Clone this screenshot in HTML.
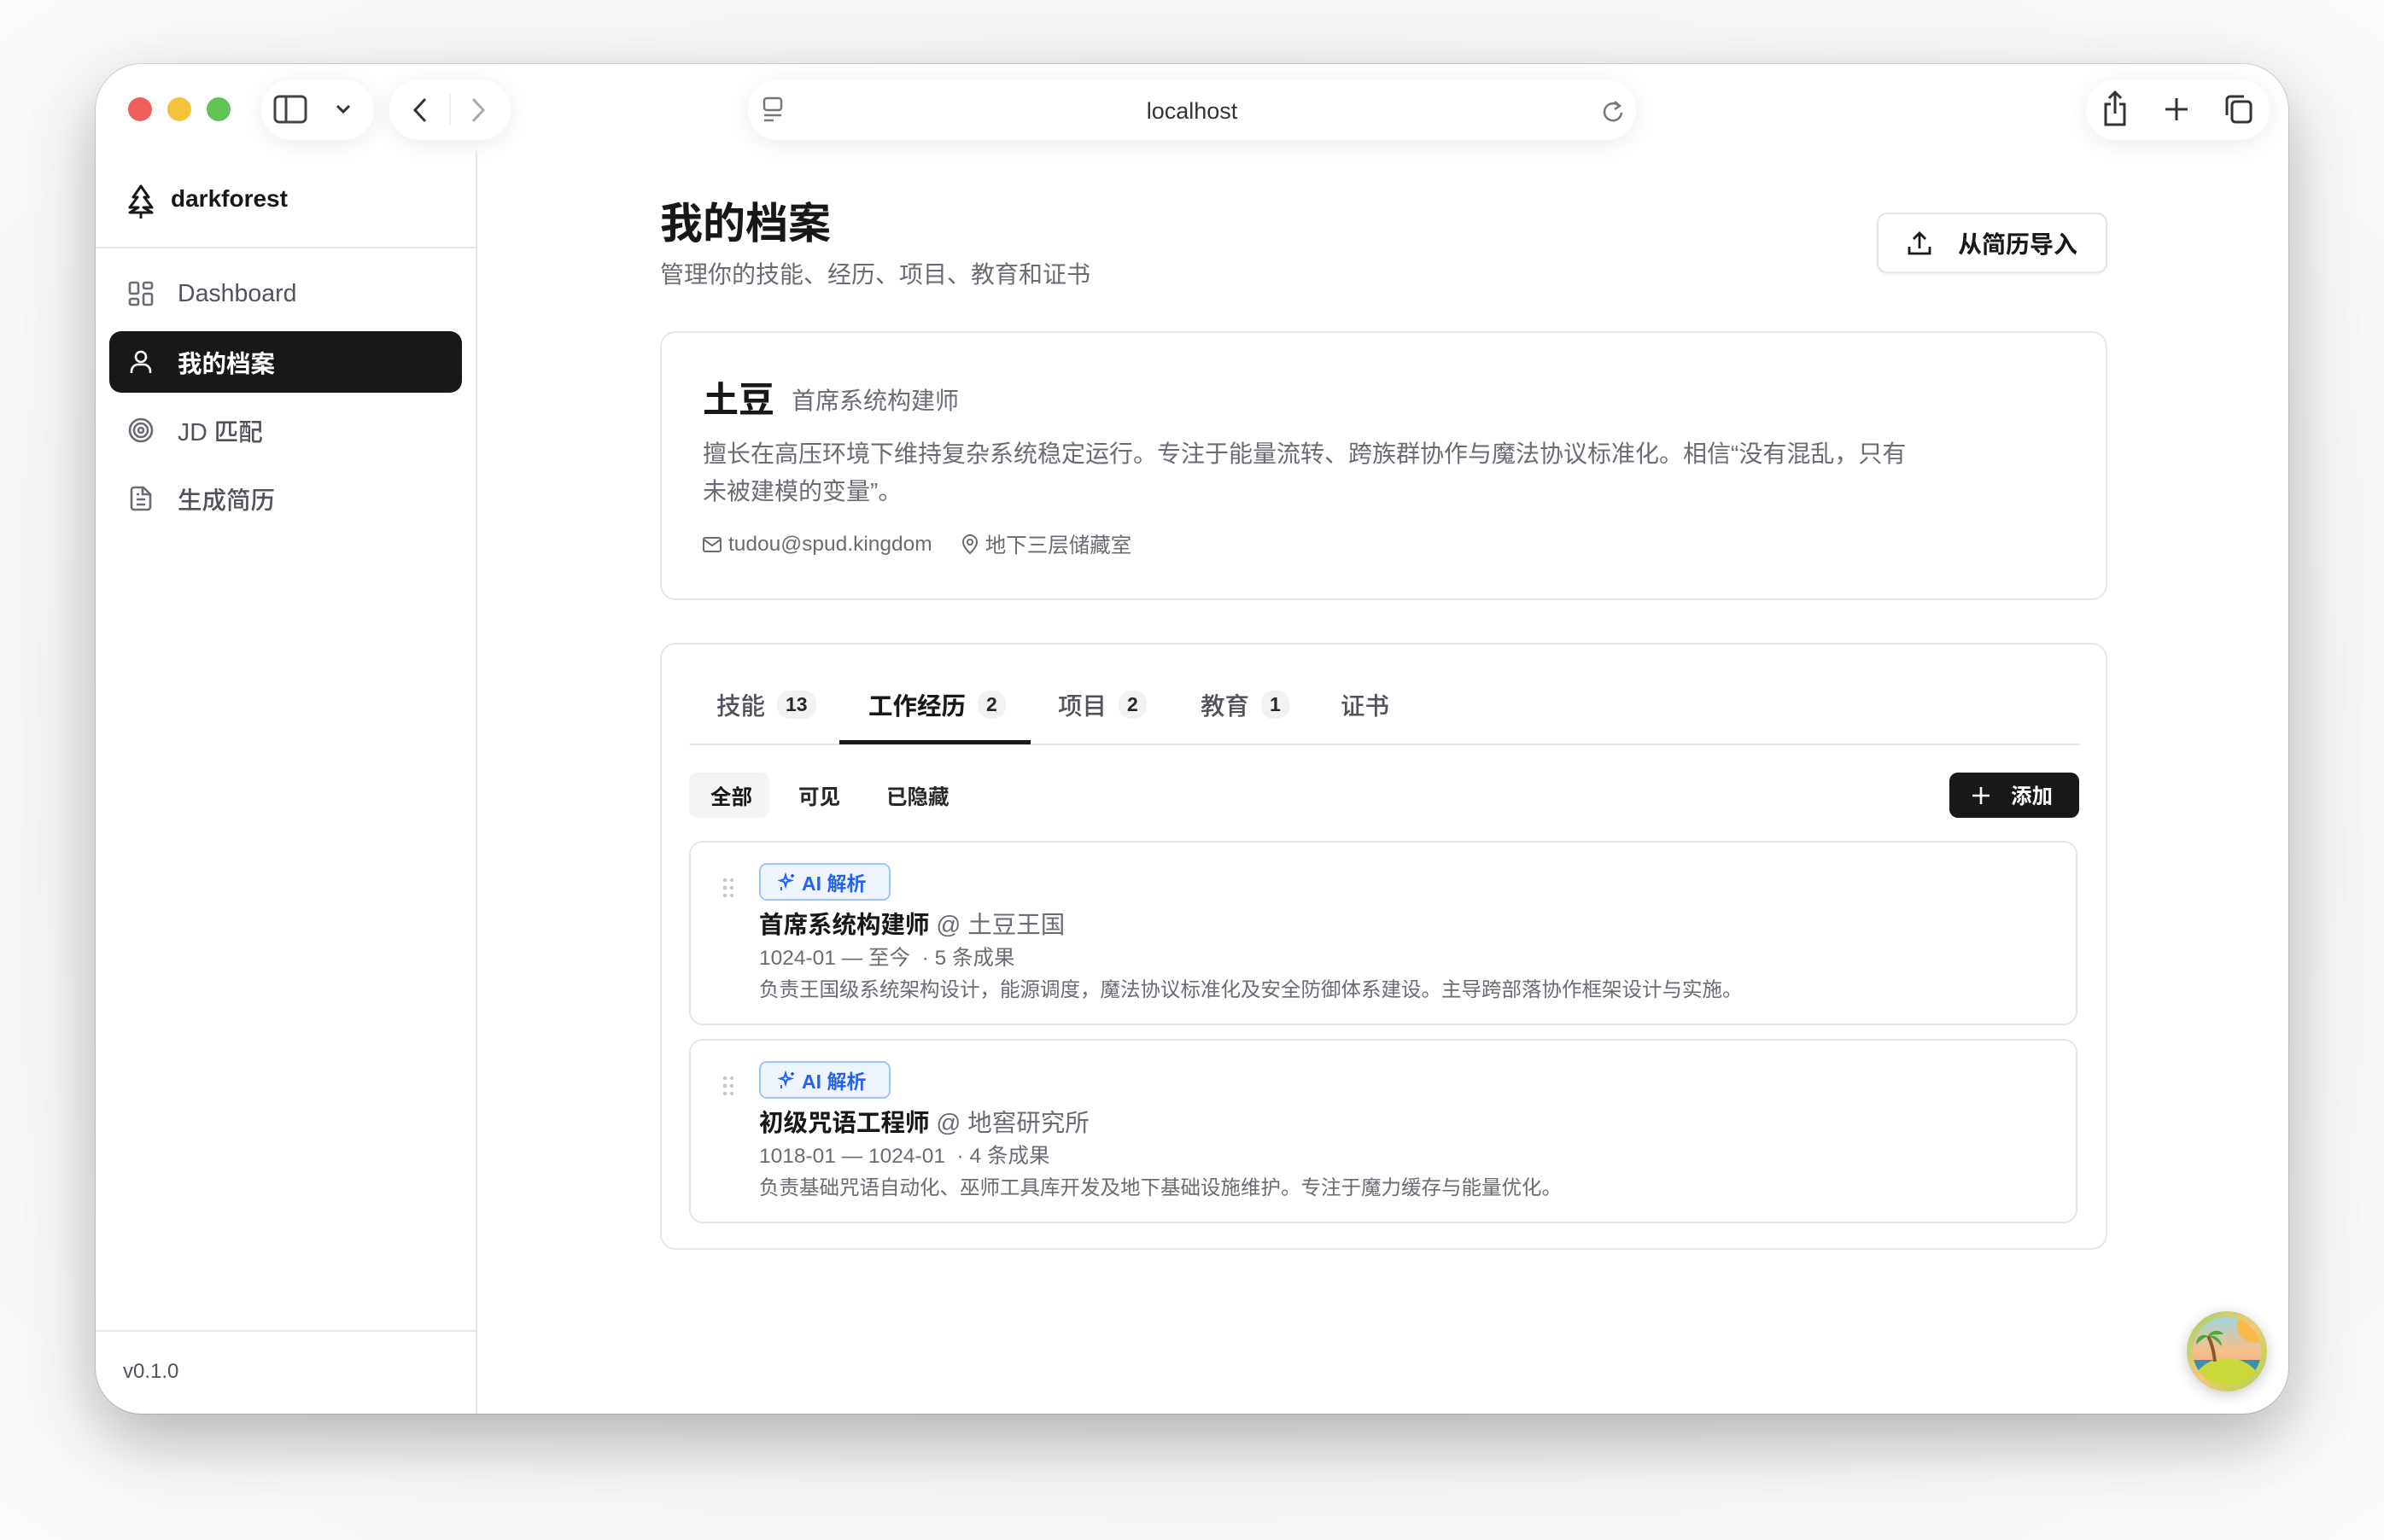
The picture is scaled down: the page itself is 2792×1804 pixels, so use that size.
<!DOCTYPE html>
<html><head><meta charset="utf-8"><style>
*{margin:0;padding:0;box-sizing:border-box}
html,body{width:2792px;height:1804px;overflow:hidden;background:#f7f7f7;font-family:"Liberation Sans","Noto Sans CJK SC",sans-serif;color:#18181b}
body{background:radial-gradient(ellipse at center,#e9e9e9 0%,#f3f3f3 55%,#fbfbfb 100%)}
.abs{position:absolute}
.win{position:absolute;left:112px;top:75px;width:2568px;height:1581px;background:#fff;border-radius:54px;box-shadow:0 30px 80px rgba(0,0,0,.28),0 0 0 1px rgba(0,0,0,.12);overflow:hidden}
.pill{position:absolute;background:#fff;border-radius:36px;box-shadow:0 4px 30px rgba(0,0,0,.08)}
.dot{position:absolute;top:39px;width:28px;height:28px;border-radius:50%}
.sb{position:absolute;left:0;top:102px;width:447px;bottom:0;border-right:2px solid #e8e8ea}
.nav{position:absolute;left:16px;width:413px;height:72px;border-radius:14px;display:flex;align-items:center;padding-left:22px;font-size:28.5px;color:#52525b;font-weight:500}
.nav svg{margin-right:28px}
.card{position:absolute;border:2px solid #e7e7e9;border-radius:18px;background:#fff}
.gray{color:#6b6b73}
.tab{position:absolute;top:50px;font-size:28.5px;color:#52525b;font-weight:500;display:flex;align-items:center}
.badge{display:inline-block;margin-left:14px;background:#f2f2f3;border-radius:14px;font-size:23px;padding:3px 10px;font-weight:700;color:#27272a}
.item{position:absolute;left:32px;width:1626px;height:216px;border:2px solid #e7e7e9;border-radius:16px}
.ai{position:absolute;left:80px;top:24px;width:154px;height:44px;border:2px solid #9fc3fb;background:#eef5ff;border-radius:9px;color:#2563eb;font-size:23px;font-weight:700;display:flex;align-items:center;padding-left:20px}
.it{position:absolute;left:80px;top:74px;font-size:28.5px;font-weight:700;color:#18181b}
.it span{font-weight:400;color:#6b6b73}
.dt{position:absolute;left:80px;top:116px;font-size:24.5px;color:#6b6b73}
.ds{position:absolute;left:80px;top:153px;font-size:23.5px;color:#6b6b73}
</style></head><body>
<div class="win">
 <div class="dot" style="left:38px;background:#ee5f5b"></div>
 <div class="dot" style="left:84px;background:#f5c33b"></div>
 <div class="dot" style="left:130px;background:#5fc454"></div>
 <div class="pill" style="left:194px;top:18px;width:132px;height:71px">
  <svg class="abs" style="left:14px;top:18px" width="40" height="34" viewBox="0 0 40 34"><rect x="2" y="2" width="36" height="30" rx="5" fill="none" stroke="#444" stroke-width="3"/><line x1="15" y1="2" x2="15" y2="32" stroke="#444" stroke-width="3"/></svg>
  <svg class="abs" style="left:86px;top:28px" width="20" height="14" viewBox="0 0 20 14"><path d="M3 3l7 7 7-7" fill="none" stroke="#333" stroke-width="3"/></svg>
 </div>
 <div class="pill" style="left:344px;top:18px;width:142px;height:71px">
  <svg class="abs" style="left:26px;top:20px" width="20" height="32" viewBox="0 0 20 32"><path d="M16 3L4 16l12 13" fill="none" stroke="#333" stroke-width="3"/></svg>
  <div class="abs" style="left:70px;top:16px;width:2px;height:38px;background:#eee"></div>
  <svg class="abs" style="left:94px;top:20px" width="20" height="32" viewBox="0 0 20 32"><path d="M4 3l12 13L4 29" fill="none" stroke="#aaa" stroke-width="3"/></svg>
 </div>
 <div class="pill" style="left:764px;top:18px;width:1040px;height:71px">
  <svg class="abs" style="left:16px;top:20px" width="26" height="30" viewBox="0 0 26 30"><rect x="3" y="2" width="20" height="14" rx="3" fill="none" stroke="#777" stroke-width="2.5"/><line x1="3" y1="22" x2="23" y2="22" stroke="#777" stroke-width="2.5"/><line x1="3" y1="28" x2="14" y2="28" stroke="#777" stroke-width="2.5"/></svg>
  <div class="abs" style="left:0;width:100%;top:22px;text-align:center;font-size:27px;color:#333">localhost</div>
  <svg class="abs" style="left:1000px;top:22px" width="28" height="30" viewBox="0 0 28 30"><path d="M20 9a10 10 0 1 0 3 8" fill="none" stroke="#777" stroke-width="2.5"/><path d="M15 4l6 5-6 4" fill="none" stroke="#777" stroke-width="2.5"/></svg>
 </div>
 <div class="pill" style="left:2331px;top:18px;width:215px;height:71px">
  <svg class="abs" style="left:19px;top:12px" width="30" height="44" viewBox="0 0 30 44"><path d="M10 17H4v24h22V17h-6" fill="none" stroke="#333" stroke-width="3"/><path d="M15 28V3M8 10l7-7 7 7" fill="none" stroke="#333" stroke-width="3"/></svg>
  <svg class="abs" style="left:91px;top:20px" width="30" height="30" viewBox="0 0 30 30"><path d="M15 2v26M2 15h26" stroke="#333" stroke-width="3"/></svg>
  <svg class="abs" style="left:161px;top:16px" width="36" height="38" viewBox="0 0 36 38"><rect x="10" y="10" width="22" height="24" rx="4" fill="none" stroke="#333" stroke-width="3"/><path d="M4 26V8a4 4 0 0 1 4-4h16" fill="none" stroke="#333" stroke-width="3"/></svg>
 </div>

 <div class="sb">
  <svg class="abs" style="left:36px;top:38px" width="34" height="42" viewBox="0 0 34 42"><path d="M17 3L8 16h5L4 28h10L4 34h26L20 28h10L21 16h5z" fill="none" stroke="#18181b" stroke-width="3" stroke-linejoin="round"/><path d="M17 34v7" stroke="#18181b" stroke-width="3"/></svg>
  <div class="abs" style="left:88px;top:40px;font-size:28px;font-weight:700">darkforest</div>
  <div class="abs" style="left:0;top:112px;width:100%;height:2px;background:#e8e8ea"></div>
  <div class="nav" style="top:131px"><svg width="30" height="30" viewBox="0 0 30 30" fill="none" stroke="#6b6b73" stroke-width="2.6"><rect x="2" y="2" width="10" height="13" rx="2"/><rect x="18" y="2" width="10" height="7" rx="2"/><rect x="18" y="15" width="10" height="13" rx="2"/><rect x="2" y="21" width="10" height="7" rx="2"/></svg>Dashboard</div>
  <div class="nav" style="top:211px;background:#18181b;color:#fff;font-weight:700"><svg width="30" height="30" viewBox="0 0 30 30" fill="none" stroke="#fff" stroke-width="2.6"><circle cx="15" cy="9" r="6"/><path d="M4 28v-2a8 8 0 0 1 8-8h6a8 8 0 0 1 8 8v2"/></svg>我的档案</div>
  <div class="nav" style="top:291px"><svg width="30" height="30" viewBox="0 0 30 30" fill="none" stroke="#6b6b73" stroke-width="2.6"><circle cx="15" cy="15" r="13"/><circle cx="15" cy="15" r="8"/><circle cx="15" cy="15" r="3"/></svg>JD 匹配</div>
  <div class="nav" style="top:371px"><svg width="30" height="30" viewBox="0 0 30 30" fill="none" stroke="#6b6b73" stroke-width="2.6"><path d="M18 2H7a3 3 0 0 0-3 3v20a3 3 0 0 0 3 3h16a3 3 0 0 0 3-3V10z"/><path d="M17 2v8h9M10 16h10M10 22h10M10 10h3"/></svg>生成简历</div>
  <div class="abs" style="left:0;top:1381px;width:100%;height:2px;background:#e8e8ea"></div>
  <div class="abs" style="left:32px;top:1416px;font-size:24px;color:#52525b">v0.1.0</div>
 </div>

 <div class="abs" style="left:661px;top:147px;font-size:50px;font-weight:700">我的档案</div>
 <div class="abs gray" style="left:661px;top:225px;font-size:28px">管理你的技能、经历、项目、教育和证书</div>
 <div class="abs" style="left:2086px;top:174px;width:270px;height:71px;border:2px solid #e4e4e7;border-radius:12px;display:flex;align-items:center;justify-content:center;font-size:28px;font-weight:700;box-shadow:0 2px 3px rgba(0,0,0,.05)">
  <svg width="30" height="30" viewBox="0 0 30 30" fill="none" stroke="#18181b" stroke-width="2.8" style="margin-right:30px"><path d="M3 19v8h24v-8M15 21V3M8 10l7-7 7 7"/></svg>从简历导入</div>

 <div class="card" style="left:661px;top:313px;width:1695px;height:315px">
  <div class="abs" style="left:48px;top:45px;font-size:42px;font-weight:700">土豆</div>
  <div class="abs gray" style="left:152px;top:58px;font-size:28px">首席系统构建师</div>
  <div class="abs gray" style="left:48px;top:120px;width:1425px;font-size:28px;line-height:44px">擅长在高压环境下维持复杂系统稳定运行。专注于能量流转、跨族群协作与魔法协议标准化。相信“没有混乱，只有未被建模的变量”。</div>
  <div class="abs gray" style="left:48px;top:230px;font-size:24.5px;display:flex;align-items:center">
   <svg width="22" height="20" viewBox="0 0 22 20" fill="none" stroke="#6b6b73" stroke-width="2" style="margin-right:8px"><rect x="1" y="2" width="20" height="16" rx="2"/><path d="M1 4l10 7 10-7"/></svg>tudou@spud.kingdom
   <svg width="20" height="24" viewBox="0 0 20 24" fill="none" stroke="#6b6b73" stroke-width="2" style="margin:0 8px 0 34px"><path d="M10 22s8-7 8-13a8 8 0 0 0-16 0c0 6 8 13 8 13z"/><circle cx="10" cy="9" r="3"/></svg>地下三层储藏室</div>
 </div>

 <div class="card" style="left:661px;top:678px;width:1695px;height:711px">
  <div class="tab" style="left:64px">技能<span class="badge">13</span></div>
  <div class="tab" style="left:242px;color:#18181b;font-weight:700">工作经历<span class="badge">2</span></div>
  <div class="tab" style="left:464px">项目<span class="badge">2</span></div>
  <div class="tab" style="left:631px">教育<span class="badge">1</span></div>
  <div class="tab" style="left:795px">证书</div>
  <div class="abs" style="left:32px;top:116px;width:1628px;height:2px;background:#e4e4e7"></div>
  <div class="abs" style="left:208px;top:112px;width:224px;height:5px;background:#18181b"></div>
  <div class="abs" style="left:32px;top:150px;width:94px;height:53px;background:#f4f4f5;border-radius:10px"></div>
  <div class="abs" style="left:57px;top:160px;font-size:24.5px;font-weight:700">全部</div>
  <div class="abs" style="left:160px;top:160px;font-size:24.5px;font-weight:700;color:#27272a">可见</div>
  <div class="abs" style="left:263px;top:160px;font-size:24.5px;font-weight:700;color:#27272a">已隐藏</div>
  <div class="abs" style="left:1508px;top:150px;width:152px;height:53px;background:#18181b;border-radius:10px;color:#fff;font-size:24.5px;font-weight:700;display:flex;align-items:center;padding-left:26px"><svg width="22" height="22" viewBox="0 0 22 22" stroke="#fff" stroke-width="2.6" style="margin-right:24px"><path d="M11 1v20M1 11h20"/></svg>添加</div>

  <div class="item" style="top:230px">
   <svg class="abs" style="left:36px;top:40px" width="16" height="26" viewBox="0 0 16 26" fill="#c4c4c8"><circle cx="4" cy="4" r="2.2"/><circle cx="12" cy="4" r="2.2"/><circle cx="4" cy="13" r="2.2"/><circle cx="12" cy="13" r="2.2"/><circle cx="4" cy="22" r="2.2"/><circle cx="12" cy="22" r="2.2"/></svg>
   <div class="ai"><svg width="22" height="22" viewBox="0 0 22 22" fill="none" stroke="#2563eb" stroke-width="2" style="margin-right:6px"><path d="M9 3l1.5 5 5 1.5-5 1.5L9 16l-1.5-5-5-1.5 5-1.5z"/><path d="M17 2v4M15 4h4M4 17v4"/></svg>AI 解析</div>
   <div class="it">首席系统构建师 <span>@ 土豆王国</span></div>
   <div class="dt">1024-01 — 至今 &nbsp;· 5 条成果</div>
   <div class="ds">负责王国级系统架构设计，能源调度，魔法协议标准化及安全防御体系建设。主导跨部落协作框架设计与实施。</div>
  </div>
  <div class="item" style="top:462px">
   <svg class="abs" style="left:36px;top:40px" width="16" height="26" viewBox="0 0 16 26" fill="#c4c4c8"><circle cx="4" cy="4" r="2.2"/><circle cx="12" cy="4" r="2.2"/><circle cx="4" cy="13" r="2.2"/><circle cx="12" cy="13" r="2.2"/><circle cx="4" cy="22" r="2.2"/><circle cx="12" cy="22" r="2.2"/></svg>
   <div class="ai"><svg width="22" height="22" viewBox="0 0 22 22" fill="none" stroke="#2563eb" stroke-width="2" style="margin-right:6px"><path d="M9 3l1.5 5 5 1.5-5 1.5L9 16l-1.5-5-5-1.5 5-1.5z"/><path d="M17 2v4M15 4h4M4 17v4"/></svg>AI 解析</div>
   <div class="it">初级咒语工程师 <span>@ 地窖研究所</span></div>
   <div class="dt">1018-01 — 1024-01 &nbsp;· 4 条成果</div>
   <div class="ds">负责基础咒语自动化、巫师工具库开发及地下基础设施维护。专注于魔力缓存与能量优化。</div>
  </div>
 </div>

 <svg class="abs" style="left:2448px;top:1460px;filter:drop-shadow(0 4px 8px rgba(0,0,0,.2))" width="96" height="96" viewBox="0 0 96 96">
  <defs><linearGradient id="ring" x1="0" y1="0" x2="1" y2="1"><stop offset="0" stop-color="#9ed56a"/><stop offset=".5" stop-color="#f2c77a"/><stop offset="1" stop-color="#a8d94a"/></linearGradient>
  <linearGradient id="sky" x1="0" y1="0" x2="0" y2="1"><stop offset="0" stop-color="#8fd8f0"/><stop offset=".5" stop-color="#f7c08a"/><stop offset="1" stop-color="#f08a7a"/></linearGradient>
  <clipPath id="cc"><circle cx="48" cy="48" r="40"/></clipPath></defs>
  <circle cx="48" cy="48" r="47" fill="url(#ring)"/>
  <g clip-path="url(#cc)"><rect width="96" height="96" fill="url(#sky)"/>
  <circle cx="80" cy="18" r="20" fill="#f6b94a"/>
  <rect x="0" y="58" width="96" height="12" fill="#3a8fae"/>
  <ellipse cx="48" cy="88" rx="40" ry="32" fill="#c9d93a"/>
  <path d="M34 60C32 45 30 38 26 30" stroke="#8b5a2b" stroke-width="4" fill="none"/>
  <path d="M26 30c-10-4-14 4-14 10 6-6 10-8 14-10zM26 30c4-8 14-8 18-2-6 0-12 0-18 2zM26 30c10-2 16 6 16 12-6-6-10-10-16-12z" fill="#4caa3a"/></g>
 </svg>
</div>
</body></html>
